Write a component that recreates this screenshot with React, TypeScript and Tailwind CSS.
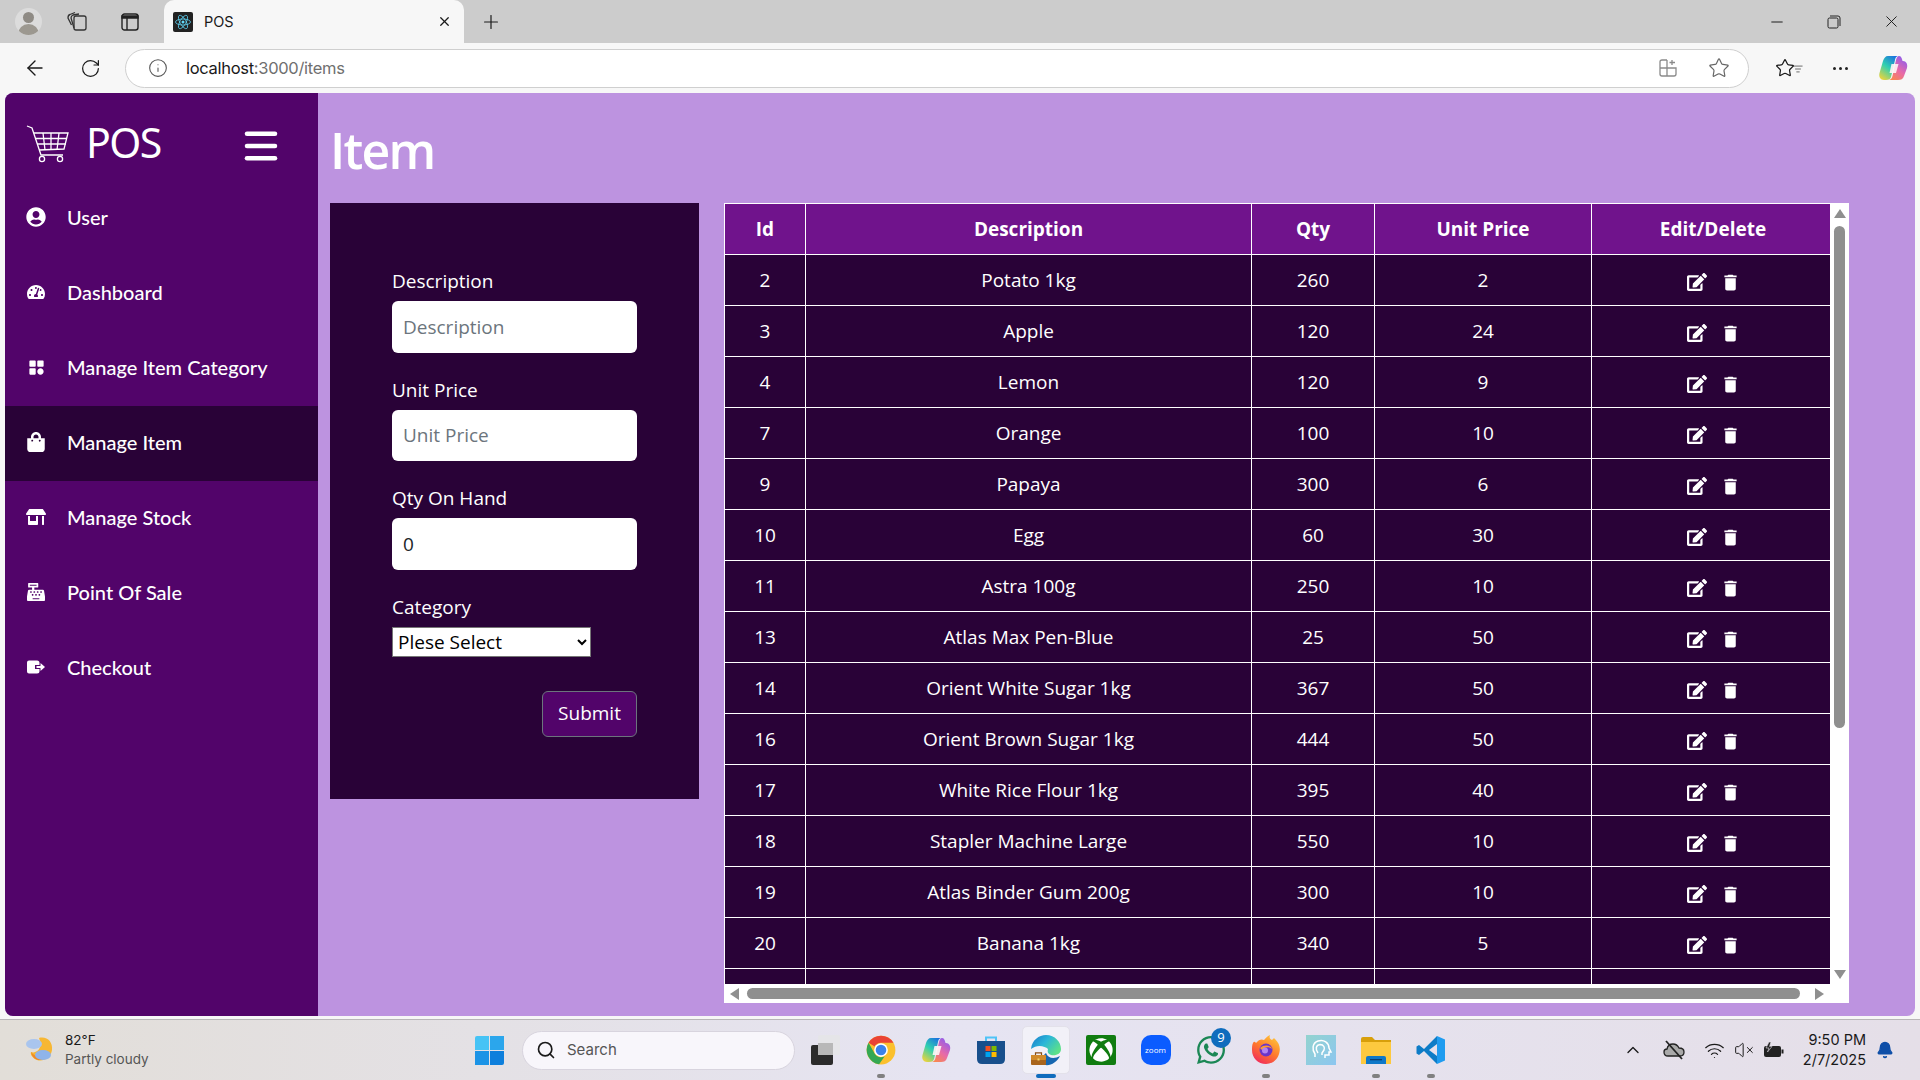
import React from 'react';
import { ArrowLeft, RotateCw, Info, Star, Plus, X, Minus, Search, ChevronUp, VolumeX, Wifi, Bell, Menu, ListFilter } from 'lucide-react';
import { FaUserCircle, FaTachometerAlt, FaShoppingBag, FaStoreAlt, FaCashRegister, FaEdit, FaWhatsapp, FaXbox } from 'react-icons/fa';
import { BiSolidCategory } from 'react-icons/bi';
import { MdDelete } from 'react-icons/md';

const CheckoutIcon = () => (
  <svg width="20" height="16" viewBox="0 0 20 16" fill="white">
    <path d="M3 1.500 H11 Q13.500 1.500 13.500 4 V6 H9 V10 H13.500 V12 Q13.500 14.500 11 14.500 H3 Q1 14.500 1 12.500 V3.500 Q1 1.500 3 1.500 Z" />
    <path d="M10.500 7 H14.500 V4 L19 8 L14.500 12 V9 H10.500 Z" />
  </svg>
);

const navItems = [
  { label: 'User', icon: <FaUserCircle size={20} /> },
  { label: 'Dashboard', icon: <FaTachometerAlt size={18} /> },
  { label: 'Manage Item Category', icon: <BiSolidCategory size={19} /> },
  { label: 'Manage Item', icon: <FaShoppingBag size={20} />, active: true },
  { label: 'Manage Stock', icon: <FaStoreAlt size={20} /> },
  { label: 'Point Of Sale', icon: <FaCashRegister size={18} /> },
  { label: 'Checkout', icon: <CheckoutIcon /> },
];

const rows = [
  [2, 'Potato 1kg', 260, 2],
  [3, 'Apple', 120, 24],
  [4, 'Lemon', 120, 9],
  [7, 'Orange', 100, 10],
  [9, 'Papaya', 300, 6],
  [10, 'Egg', 60, 30],
  [11, 'Astra 100g', 250, 10],
  [13, 'Atlas Max Pen-Blue', 25, 50],
  [14, 'Orient White Sugar 1kg', 367, 50],
  [16, 'Orient Brown Sugar 1kg', 444, 50],
  [17, 'White Rice Flour 1kg', 395, 40],
  [18, 'Stapler Machine Large', 550, 10],
  [19, 'Atlas Binder Gum 200g', 300, 10],
  [20, 'Banana 1kg', 340, 5],
];

const CartLogo = () => (
  <svg width="44" height="38" viewBox="0 0 44 38" fill="none" stroke="white" strokeWidth="1.3">
    <path d="M1 1 L6 3 L15 30 H37" />
    <path d="M8 8 H42 L38 24 L13 25" />
    <path d="M9 13.5 H41 M11 19 H40 M17 8 L19 25 M25 8 L25 25 M33 8 L31 25" />
    <circle cx="16" cy="34" r="2.6" />
    <circle cx="34" cy="34" r="2.6" />
  </svg>
);

const Copilot = () => (
  <svg width="30" height="30" viewBox="0 0 30 30">
    <defs>
      <linearGradient id="cpa" x1="0.800" y1="0" x2="0.200" y2="1">
        <stop offset="0" stopColor="#1a6fe0" />
        <stop offset="0.5" stopColor="#2fd0b0" />
        <stop offset="1" stopColor="#e8d33f" />
      </linearGradient>
      <linearGradient id="cpb" x1="0.800" y1="0" x2="0.200" y2="1">
        <stop offset="0" stopColor="#8a5cf0" />
        <stop offset="0.55" stopColor="#e86aa8" />
        <stop offset="1" stopColor="#f98a4a" />
      </linearGradient>
    </defs>
    <path d="M10 3 H21 C18 3 17.500 5 17 7 L13 24 C12.500 26 11 27 8 27 H6 C2.500 27 0.500 24 1.500 20 L5 8 C6 5 7.500 3 10 3 Z" fill="url(#cpa)" />
    <path d="M21 3 C23 3 24 5 24.500 8 H25 C28 8 30 11 29 15 L26 23 C25 26 23 27 20 27 H10 C13 27 14 25 14.500 23 L18 7 C18.500 5 19.500 3 21 3 Z" fill="url(#cpb)" />
    <path d="M13.500 11 H20.500 L18 20 H11.500 Z" fill="#fff6f6" opacity="0.9" />
  </svg>
);

const Chrome = () => (
  <svg width="30" height="30" viewBox="0 0 48 48">
    <circle cx="24" cy="24" r="23" fill="#fbc02d" />
    <path d="M4.100 12.500 A23 23 0 0 1 43.900 12.500 H24 A11.500 11.500 0 0 0 14 18.200 Z" fill="#ea4335" />
    <path d="M4.100 12.500 A23 23 0 0 0 21 46.800 L30 34 A11.500 11.500 0 0 1 14 30 Z" fill="#34a853" />
    <circle cx="24" cy="24" r="11" fill="white" />
    <circle cx="24" cy="24" r="8.500" fill="#3b82ea" />
  </svg>
);

const Store = () => (
  <svg width="30" height="30" viewBox="0 0 30 30">
    <path d="M10 6 V2.500 H20 V6" fill="none" stroke="#4fc3f7" strokeWidth="2" />
    <path d="M1 6 H29 V24 Q29 29 24 29 H6 Q1 29 1 24 Z" fill="#184f8c" />
    <rect x="9.500" y="11" width="5" height="5" fill="#f25022" />
    <rect x="15.500" y="11" width="5" height="5" fill="#7fba00" />
    <rect x="9.500" y="17" width="5" height="5" fill="#00a4ef" />
    <rect x="15.500" y="17" width="5" height="5" fill="#ffb900" />
  </svg>
);

const Edge = () => (
  <svg width="32" height="32" viewBox="0 0 32 32">
    <defs>
      <linearGradient id="edg" x1="0" y1="0" x2="1" y2="0.6">
        <stop offset="0" stopColor="#1877c9" />
        <stop offset="0.5" stopColor="#2bb6d8" />
        <stop offset="1" stopColor="#5be08a" />
      </linearGradient>
    </defs>
    <path d="M1 15 C2 6 9 1 16 1 C25 1 31 8 31 15 C31 20 26 22 21 21 C18 20 17 18 18 15 C15 12 7 10 1 15 Z" fill="url(#edg)" />
    <path d="M15 31 C10 30 12 22 16 19 C18 25 25 25 30 22 C27 28 21 32 15 31 Z" fill="#1767b0" />
    <rect x="1" y="21" width="15" height="10" rx="1" fill="#a9651c" />
    <rect x="1" y="21" width="15" height="5" rx="1" fill="#d08a2a" />
    <rect x="7.500" y="24.500" width="2" height="2" fill="#f4d26b" />
    <path d="M5.500 21 V18.800 H11.500 V21" fill="none" stroke="#8a4f14" strokeWidth="1.200" />
  </svg>
);

const Firefox = () => (
  <svg width="30" height="30" viewBox="0 0 30 30">
    <defs>
      <linearGradient id="ffx" x1="0.800" y1="0" x2="0.200" y2="1">
        <stop offset="0" stopColor="#ffc83a" />
        <stop offset="0.5" stopColor="#ff7a2c" />
        <stop offset="1" stopColor="#f0265e" />
      </linearGradient>
    </defs>
    <path d="M2 8 C3 6 4 7 5 8 C8 4 11 4 13 5 C15 3 16 1 19 0 C18 3 19 4 21 5 C23 3 23 3 24 4 C28 8 29.500 12 28.500 17 C27 25 21 29 15 29 C7 29 1 23 1 15 C1 12 1 10 2 8 Z" fill="url(#ffx)" />
    <circle cx="15" cy="15" r="6.500" fill="#6b35c9" />
    <path d="M9 13 C13 9 20 10 21 14 C18 11 13 12 11 15 Z" fill="#ff9a2e" />
    <circle cx="14" cy="15.500" r="3" fill="#b384f0" />
  </svg>
);

const AppTile = () => (
  <svg width="30" height="30" viewBox="0 0 30 30">
    <defs>
      <linearGradient id="apt" x1="0" y1="0" x2="1" y2="1">
        <stop offset="0" stopColor="#93d3cf" />
        <stop offset="1" stopColor="#8cc6f0" />
      </linearGradient>
    </defs>
    <rect width="30" height="30" fill="url(#apt)" />
    <path d="M9 22 V19 C6 15 6 8 12 6 C18 4 23 8 23 13 L25 17 H23 V20 H19 V23" fill="none" stroke="white" strokeWidth="1.500" />
    <path d="M12 18 C9 14 10 10 14 9.500 C18 9.500 19 13 18 15 L16 18 V20" fill="none" stroke="white" strokeWidth="1.500" />
  </svg>
);

const Folder = () => (
  <svg width="30" height="28" viewBox="0 0 30 28">
    <path d="M0 3 Q0 1 2 1 H11 L14 4 H30 V8 H0 Z" fill="#d89f0b" />
    <rect y="6" width="30" height="22" fill="#fdc93f" />
    <path d="M5 28 V22 Q5 20 7 20 H23 Q25 20 25 22 V28 Z" fill="#0f78c8" />
    <rect x="9" y="23" width="12" height="1.300" fill="#0b3f74" />
  </svg>
);

const VsCode = () => (
  <svg width="30" height="30" viewBox="0 0 30 30">
    <path d="M21 1 L29 4.500 V25.500 L21 29 L21 1 Z" fill="#1f9cf0" />
    <path d="M21 1 L8 14 L3 10 L0.500 11.500 V18.500 L3 20 L8 16 L21 29 V21 L13 15 L21 9 Z" fill="#0d7cc7" />
  </svg>
);

const TaskIcon: React.FC<{ children: React.ReactNode; open?: boolean }> = ({ children, open }) => (
  <div className="relative w-[55px] h-full flex items-center justify-center">
    {children}
    {open && <span className="absolute bottom-[2px] w-[8px] h-[4px] rounded-full bg-[#808080]" />}
  </div>
);

const thCell = 'border border-white font-bold text-[19px] pt-[1px]';
const tdCell = 'border border-white text-[19px] pt-[1px]';
const labelClass = 'block h-[32px] leading-[32px] mb-[4px]';
const inputClass = 'block w-full h-[51.5px] bg-white rounded-[6px] px-[11px] mb-[21px] text-[#212529] placeholder:text-[#6c757d]';

export default function App() {
  return (
    <div className="w-[1920px] h-[1080px] overflow-hidden flex flex-col bg-[#f7f7f7] font-['Open_Sans',sans-serif]">
      {/* Tab strip */}
      <div className="h-[43px] bg-[#cccccc] flex items-center text-[#1a1a1a] shrink-0">
        <div className="w-[56px] flex justify-center">
          <div className="w-[27px] h-[27px] rounded-full bg-[#dcdcdc] overflow-hidden flex flex-col items-center">
            <span className="w-[11px] h-[11px] rounded-full bg-[#8f8b85] mt-[4px]" />
            <span className="w-[21px] h-[12px] rounded-t-full bg-[#9c9890] mt-[1px]" />
          </div>
        </div>
        <div className="w-[42px] flex justify-center">
          <svg width="22" height="22" viewBox="0 0 22 22" fill="none" stroke="#333" strokeWidth="1.300">
            <rect x="8" y="5" width="12" height="14" rx="2" />
            <path d="M8 17 L5 7 Q5 5 7 4 L13 3 M5.500 14 L2 7 Q2 4 4 3.500 L9 1.500" />
          </svg>
        </div>
        <div className="w-[66px] flex justify-center pr-[2px]">
          <svg width="18" height="18" viewBox="0 0 18 18" fill="none" stroke="#222" strokeWidth="1.400">
            <rect x="1" y="1" width="16" height="16" rx="2.500" />
            <path d="M1 3 H17 V5 H1 Z M6 5 V17" fill="#222" />
          </svg>
        </div>
        <div className="w-[300px] h-full bg-[#f7f7f7] rounded-t-[10px] flex items-center pl-[9px] pr-[12px]">
          <div className="w-[20px] h-[20px] bg-[#222] rounded-[2px] flex items-center justify-center">
            <svg width="18" height="18" viewBox="-12 -12 24 24" fill="none" stroke="#61dafb" strokeWidth="1">
              <circle r="2" fill="#61dafb" stroke="none" />
              <ellipse rx="10" ry="4" />
              <ellipse rx="10" ry="4" transform="rotate(60)" />
              <ellipse rx="10" ry="4" transform="rotate(120)" />
            </svg>
          </div>
          <span className="ml-[11px] text-[14.5px] font-['Inter',sans-serif]">POS</span>
          <X size={15} strokeWidth={2} className="ml-auto" />
        </div>
        <Plus size={22} strokeWidth={1.3} className="ml-[16px]" />
        <Minus size={18} strokeWidth={1.3} className="ml-auto" />
        <svg width="14" height="14" viewBox="0 0 14 14" fill="none" stroke="#222" strokeWidth="1" className="ml-[41px]">
          <rect x="1" y="3" width="10" height="10" rx="1.500" />
          <path d="M3 1 H11 Q13 1 13 3 V11" />
        </svg>
        <X size={19} strokeWidth={1.2} className="ml-[41px] mr-[19px]" />
      </div>

      {/* Address bar */}
      <div className="h-[50px] bg-[#f7f7f7] flex items-center text-[#1a1a1a] shrink-0">
        <div className="w-[70px] flex justify-center"><ArrowLeft size={24} strokeWidth={1.4} /></div>
        <div className="w-[40px] flex justify-center"><RotateCw size={21} strokeWidth={1.4} /></div>
        <div className="ml-[15px] w-[1624px] h-[39px] bg-white border border-[#cfcfcf] rounded-full flex items-center">
          <Info size={20} strokeWidth={1.3} className="ml-[22px] text-[#555]" />
          <span className="ml-[18px] text-[16.5px] font-['Inter',sans-serif] tracking-[-0.3px]">
            localhost<span className="text-[#6f6f6f]">:3000/items</span>
          </span>
          <svg width="18" height="18" viewBox="0 0 18 18" fill="none" stroke="#8a8a8a" strokeWidth="1.300" className="ml-auto">
            <path d="M8 1 H3 Q1 1 1 3 V15 Q1 17 3 17 H15 Q17 17 17 15 V9 H1 M8 1 V17 M13 1 V6 M10.500 3.500 H16" />
          </svg>
          <Star size={22} strokeWidth={1.3} className="ml-[31px] mr-[18px] text-[#666]" />
        </div>
        <div className="w-[72px] flex justify-center relative">
          <Star size={20} strokeWidth={1.5} />
          <ListFilter size={10} strokeWidth={1.5} className="absolute right-[18px] top-[6px]" />
        </div>
        <div className="w-[38px] flex justify-center gap-[3px]">
          <span className="w-[3px] h-[3px] rounded-full bg-[#222]" />
          <span className="w-[3px] h-[3px] rounded-full bg-[#222]" />
          <span className="w-[3px] h-[3px] rounded-full bg-[#222]" />
        </div>
        <div className="ml-[19px]"><Copilot /></div>
      </div>

      {/* Page */}
      <div className="mx-[5px] h-[923px] rounded-[8px] overflow-hidden flex bg-[#bd93e0] shrink-0">
        <aside className="w-[313px] bg-[#52046a] text-white flex flex-col shrink-0">
          <div className="h-[88px] flex items-center pl-[21px] pt-[14px] font-['Noto_Sans',sans-serif]">
            <CartLogo />
            <span className="ml-[16px] text-[41px] leading-none -mt-[3px] tracking-[-1.5px]">POS</span>
            <Menu size={42} strokeWidth={2.6} className="ml-[79px] mt-[3px]" />
          </div>
          {navItems.map((item) => (
            <div key={item.label} className={`h-[75px] pb-[3px] flex items-center font-['Lato',sans-serif] text-[20px] font-medium ${item.active ? 'bg-[#290237]' : ''}`}>
              <div className="w-[20px] ml-[21px] flex justify-center">{item.icon}</div>
              <span className="ml-[21px]">{item.label}</span>
            </div>
          ))}
        </aside>

        <main className="flex-1 pl-[12px] text-white">
          <h1 className="h-[110px] flex items-center pt-[4px] text-[50px] font-semibold tracking-[-1.8px] leading-none">Item</h1>
          <div className="flex items-start">
            <form className="w-[369px] h-[596px] bg-[#290237] px-[62px] pt-[62px] shrink-0 text-[19px]">
              <label className={labelClass}>Description</label>
              <input placeholder="Description" className={inputClass} />
              <label className={labelClass}>Unit Price</label>
              <input placeholder="Unit Price" className={inputClass} />
              <label className={labelClass}>Qty On Hand</label>
              <input defaultValue="0" className={inputClass} />
              <label className={labelClass}>Category</label>
              <select className="block w-[199px] h-[30px] pl-[1px] bg-white border border-[#767676] text-black text-[19px] leading-none">
                <option>Plese Select</option>
              </select>
              <div className="flex justify-end mt-[34px]">
                <button type="button" className="w-[95px] h-[46px] rounded-[6px] bg-[#52046a] border border-[#6c757d] text-white">Submit</button>
              </div>
            </form>

            {/* Table with its scrollbars */}
            <div className="ml-[25px] w-[1125px] h-[800px] bg-white flex flex-col shrink-0">
              <div className="flex h-[781px]">
                <div className="w-[1106px] overflow-hidden">
                  <table className="w-[1106px] table-fixed border-collapse text-center">
                    <colgroup>
                      <col className="w-[81px]" />
                      <col className="w-[446px]" />
                      <col className="w-[123px]" />
                      <col className="w-[217px]" />
                      <col className="w-[239px]" />
                    </colgroup>
                    <thead>
                      <tr className="h-[51px] bg-[#70138c]">
                        <th className={thCell}>Id</th>
                        <th className={thCell}>Description</th>
                        <th className={thCell}>Qty</th>
                        <th className={thCell}>Unit Price</th>
                        <th className={`${thCell} pl-[4px]`}>Edit/Delete</th>
                      </tr>
                    </thead>
                    <tbody className="bg-[#290237]">
                      {rows.map((r) => (
                        <tr key={r[0]} className="h-[51px]">
                          <td className={tdCell}>{r[0]}</td>
                          <td className={tdCell}>{r[1]}</td>
                          <td className={tdCell}>{r[2]}</td>
                          <td className={tdCell}>{r[3]}</td>
                          <td className={tdCell}>
                            <div className="flex items-center justify-center gap-[13px] mt-[3px] pl-[5px]">
                              <FaEdit size={20} />
                              <MdDelete size={21} />
                            </div>
                          </td>
                        </tr>
                      ))}
                      <tr className="h-[51px]">
                        <td className={tdCell}></td>
                        <td className={tdCell}></td>
                        <td className={tdCell}></td>
                        <td className={tdCell}></td>
                        <td className={tdCell}></td>
                      </tr>
                    </tbody>
                  </table>
                </div>
                <div className="w-[19px] flex flex-col items-center pt-[6px]">
                  <span className="w-0 h-0 border-x-[6px] border-x-transparent border-b-[9px] border-b-[#8f8f8f]" />
                  <span className="w-[11px] h-[502px] mt-[8px] rounded-full bg-[#8f8f8f]" />
                  <span className="mt-auto mb-[5px] w-0 h-0 border-x-[6px] border-x-transparent border-t-[9px] border-t-[#8f8f8f]" />
                </div>
              </div>
              <div className="h-[19px] flex items-center pl-[6px]">
                <span className="w-0 h-0 border-y-[6px] border-y-transparent border-r-[9px] border-r-[#8f8f8f]" />
                <span className="w-[1053px] h-[11px] ml-[8px] rounded-full bg-[#8f8f8f]" />
                <span className="ml-[15px] w-0 h-0 border-y-[6px] border-y-transparent border-l-[9px] border-l-[#8f8f8f]" />
              </div>
            </div>
          </div>
        </main>
      </div>

      {/* Windows taskbar */}
      <div className="mt-[3px] flex-1 border-t border-[#b9b6b8] bg-linear-to-r from-[#e2ded8] via-[#e6e4f2] to-[#e5dfe8] flex items-center relative text-[#1a1a1a]">
        <div className="w-[475px] flex items-center pl-[25px] h-full">
          <svg width="32" height="32" viewBox="0 0 32 32">
            <path d="M14 4 C22 2 28 8 27 16 C26 24 18 28 12 26 C7 24 5 20 6 18 C12 20 18 14 14 4 Z" fill="#f7b733" />
            <path d="M6 18 C9 22 14 24 22 22 C18 28 8 28 6 18 Z" fill="#ee8a2a" />
            <ellipse cx="9" cy="10" rx="8" ry="5" fill="#a9c5ee" />
            <ellipse cx="18" cy="21" rx="8" ry="5" fill="#8fb4ea" />
          </svg>
          <div className="ml-[8px] text-[13.5px] leading-[19px] font-['Inter',sans-serif]">
            <div>82°F</div>
            <div className="text-[#555]">Partly cloudy</div>
          </div>
        </div>
        <div className="w-[29px] h-[29px] grid grid-cols-2 gap-[1px]">
          <span className="bg-[#46c3f5] rounded-tl-[2px]" />
          <span className="bg-[#2ba6ec]" />
          <span className="bg-[#1b93e6]" />
          <span className="bg-[#0e7fdc] rounded-br-[2px]" />
        </div>
        <div className="ml-[18px] w-[273px] h-[39px] rounded-full bg-[#f8f6fb] border border-[#d8d4de] flex items-center pl-[13px] mr-[3px]">
          <Search size={20} strokeWidth={2} />
          <span className="ml-[11px] text-[15px] text-[#555] font-['Inter',sans-serif]">Search</span>
        </div>
        <TaskIcon>
          <div className="relative w-[30px] h-[30px]">
            <span className="absolute left-[7px] top-0 w-[22px] h-[20px] bg-[#e5e5e8] rounded-[2px]" />
            <span className="absolute left-0 bottom-0 w-[22px] h-[20px] bg-[#2b2b2b] rounded-[2px]" />
            <span className="absolute left-[7px] top-[8px] w-[15px] h-[12px] bg-[#b8b8b8]" />
          </div>
        </TaskIcon>
        <TaskIcon open><Chrome /></TaskIcon>
        <TaskIcon><Copilot /></TaskIcon>
        <TaskIcon><Store /></TaskIcon>
        <TaskIcon>
          <div className="w-[48px] h-[48px] rounded-[5px] bg-[#f2f1f8] border border-[#e3e1ea] flex items-center justify-center"><Edge /></div>
          <span className="absolute bottom-[2px] w-[20px] h-[4px] rounded-full bg-[#0f6cbd]" />
        </TaskIcon>
        <TaskIcon>
          <div className="w-[30px] h-[30px] rounded-[2px] bg-[#107c10] flex items-center justify-center text-white"><FaXbox size={24} /></div>
        </TaskIcon>
        <TaskIcon>
          <div className="w-[30px] h-[30px] rounded-[10px] bg-[#0b5cff] flex items-center justify-center text-white text-[8px]">zoom</div>
        </TaskIcon>
        <TaskIcon>
          <FaWhatsapp size={32} className="text-[#1b8755]" />
          <span className="absolute top-[8px] right-[7px] w-[20px] h-[20px] rounded-full bg-[#0f6cbd] text-white text-[13px] flex items-center justify-center">9</span>
        </TaskIcon>
        <TaskIcon open><Firefox /></TaskIcon>
        <TaskIcon><AppTile /></TaskIcon>
        <TaskIcon open><Folder /></TaskIcon>
        <TaskIcon open><VsCode /></TaskIcon>

        <div className="ml-auto flex items-center h-full">
          <ChevronUp size={20} strokeWidth={1.6} />
          <svg width="22" height="20" viewBox="0 0 22 20" fill="none" stroke="#222" strokeWidth="1.300" className="ml-[20px]">
            <path d="M5 16 Q1 16 1 12 Q1 9 4 9 Q5 4 10 4 Q14 4 16 8 Q21 8 21 12 Q21 16 17 16 Z" fill="#a9a9a9" />
            <path d="M3 1 L19 19" strokeWidth="1.800" />
          </svg>
          <Wifi size={21} strokeWidth={1.4} className="ml-[19px]" />
          <VolumeX size={20} strokeWidth={1.2} className="ml-[9px]" />
          <svg width="21" height="16" viewBox="0 0 21 16" className="ml-[9px]">
            <rect x="1" y="4" width="17" height="11" rx="2" fill="#222" />
            <rect x="18.500" y="7.500" width="2" height="4" fill="#222" />
            <path d="M6 0 L3 6 H6 L4.500 10 L9 4.500 H6.500 L8 0 Z" fill="#222" stroke="#e5e1ea" strokeWidth="0.600" />
          </svg>
          <div className="ml-[19px] text-right text-[14.5px] leading-[20px] font-['Inter',sans-serif]">
            <div>9:50 PM</div>
            <div>2/7/2025</div>
          </div>
          <Bell size={18} fill="#0f4fa8" stroke="#0f4fa8" className="ml-[10px] mr-[26px]" />
        </div>
      </div>
    </div>
  );
}
